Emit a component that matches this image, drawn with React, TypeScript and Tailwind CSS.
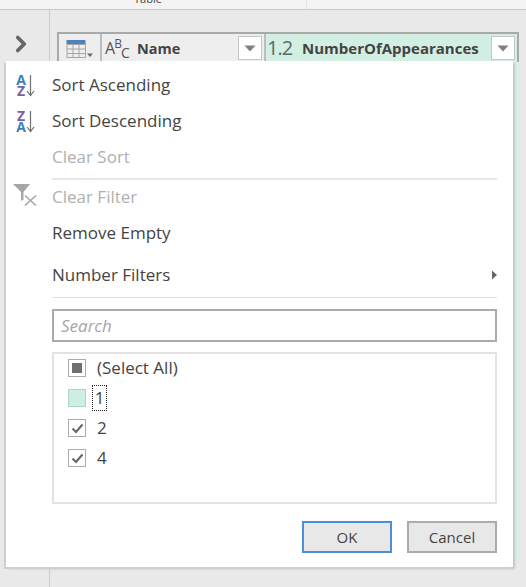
import { ChevronRight } from 'lucide-react';

const font = { fontFamily: '"Open Sans", "Noto Sans", sans-serif' };

function DropButton() {
  return (
    <div className="w-[24px] h-[24px] bg-white border border-[#c4c8c6] flex items-center justify-center shrink-0">
      <svg width="12" height="7" viewBox="0 0 12 7"><path d="M0.5 0.5H11.5L6 6.5Z" fill="#808080" /></svg>
    </div>
  );
}

function TableIcon() {
  return (
    <svg width="30" height="20" viewBox="0 0 30 20">
      <rect x="0.5" y="1" width="19" height="4" fill="#4f81bd" />
      <path d="M1 5.5H19M1 10H19M1 14.5H19M1 5V18.5H19.5V5M7 5V18.5M13 5V18.5" fill="none" stroke="#a6a6a6" strokeWidth="1" />
      <path d="M21 14.5H27L24 18Z" fill="#6a6a6a" />
    </svg>
  );
}

function SortIcon({ top, bottom }: { top: string; bottom: string }) {
  const color = (c: string) => (c === 'A' ? 'text-[#3f7fb8]' : 'text-[#7a5ea6]');
  return (
    <div className="w-[22px] h-[26px] flex items-center ml-[1px]">
      <div className="w-[10px] flex flex-col items-center font-bold text-[14px] leading-[11px]">
        <span className={color(top)}>{top}</span>
        <span className={color(bottom)}>{bottom}</span>
      </div>
      <svg width="9" height="24" viewBox="0 0 9 24">
        <path d="M4.5 2V22M1 18L4.5 22.5L8 18" fill="none" stroke="#6e6e6e" strokeWidth="1.2" />
      </svg>
    </div>
  );
}

function FilterIcon() {
  return (
    <svg width="26" height="26" viewBox="0 0 26 26" className="-ml-[3px]">
      <path d="M1 0H18L11.5 8V15.5L9 17V8Z" fill="#a6a6a6" />
      <path d="M13 11.5L24 21.5M24 11.5L13 21.5" stroke="#a6a6a6" strokeWidth="1.6" fill="none" />
    </svg>
  );
}

function MenuItem({ label, icon, disabled, h = 36, arrow }: { label: string; icon?: React.ReactNode; disabled?: boolean; h?: number; arrow?: boolean }) {
  return (
    <div className="flex items-center pl-[9px] pr-[15px]" style={{ height: h }}>
      <div className="w-[37px] flex items-center justify-start">{icon}</div>
      <span className={`flex-1 text-[17px] ${disabled ? 'text-[#b0b0b0]' : 'text-[#444444]'}`}>{label}</span>
      {arrow && (
        <svg width="7" height="10" viewBox="0 0 7 10"><path d="M1 0.5L6 5L1 9.5Z" fill="#666666" /></svg>
      )}
    </div>
  );
}

function CheckRow({ label, state }: { label: string; state: 'partial' | 'empty' | 'checked' }) {
  return (
    <div className="h-[30px] flex items-center pl-[14px]">
      <div className={`w-[18px] h-[18px] border flex items-center justify-center shrink-0 ${state === 'empty' ? 'bg-[#cdeee0] border-[#a9d9c5]' : 'bg-white border-[#ababab]'}`}>
        {state === 'partial' && <div className="w-[10px] h-[10px] bg-[#707070]" />}
        {state === 'checked' && (
          <svg width="13" height="11" viewBox="0 0 13 11"><path d="M1.5 5.5L5 9L11.5 1.5" fill="none" stroke="#6a6a6a" strokeWidth="2.2" /></svg>
        )}
      </div>
      {state === 'empty' ? (
        <span className="ml-[6px] w-[15px] h-[26px] border border-dotted border-[#222222] flex items-center justify-center text-[17px] text-[#444444]">{label}</span>
      ) : (
        <span className="ml-[11px] text-[17px] text-[#444444]">{label}</span>
      )}
    </div>
  );
}

export default function App() {
  return (
    <div className="relative w-[526px] h-[587px] overflow-hidden bg-[#e9e9e9] flex flex-col" style={font}>
      <div className="h-[10px] shrink-0 bg-[#f4f4f4] border-b border-[#c9c9c9] flex overflow-hidden">
        <div className="w-[307px] pr-[10px] border-r border-[#e6e6e6] flex justify-center">
          <span className="text-[11px] leading-[11px] text-[#444444] -mt-[7px]">Table</span>
        </div>
      </div>
      <div className="flex-1 flex">
        <div className="w-[50px] shrink-0 border-r border-[#cdcdcd] flex justify-center pt-[21px] pr-[7px]">
          <ChevronRight size={26} strokeWidth={3.5} className="text-[#666666]" />
        </div>
        <div className="flex-1 pl-[7px] pr-[8px] pt-[22px]">
          <div className="h-[30px] flex border-2 border-[#a9a9a9] border-b-0 bg-[#eeeeee]">
            <div className="w-[43px] border-r-2 border-[#bdbdbd] flex items-center pl-[7px] pt-[2px]"><TableIcon /></div>
            <div className="w-[164px] flex items-center pl-[3px] pr-[2px] border-r-2 border-[#bdbdbd]">
              <span className="w-[32px] text-[16px] text-[#555555] tracking-[-1px]">A<sup className="text-[12px]">B</sup><sub className="text-[14px]">C</sub></span>
              <span className="flex-1 pt-[1px] text-[14.5px] font-bold text-[#444444]">Name</span>
              <DropButton />
            </div>
            <div className="flex-1 flex items-center bg-[#d3efe3] pl-[1px] pr-[2px]">
              <span className="w-[35px] text-[20px] text-[#5a6b63] tracking-[-1px]">1.2</span>
              <span className="flex-1 text-[15px] font-bold text-[#444444]">NumberOfAppearances</span>
              <DropButton />
            </div>
          </div>
          <div className="h-[497px] ml-[457px] -mr-[1px] w-[6px] bg-[#dcefe7]" />
        </div>
      </div>

      <div className="absolute left-[6px] top-[61px] w-[507px] h-[506px] bg-white shadow-[-2px_2px_0_#cfcfcf,2px_2px_2px_#c4c4c4] flex flex-col">
        <div className="h-[6px]" />
        <MenuItem label="Sort Ascending" icon={<SortIcon top="A" bottom="Z" />} />
        <MenuItem label="Sort Descending" icon={<SortIcon top="Z" bottom="A" />} />
        <MenuItem label="Clear Sort" disabled />
        <div className="ml-[46px] mr-[16px] h-[2px] bg-[#e6e6e6] mt-[3px] mb-[0px]" />
        <div className="-mt-[1px]">
          <MenuItem label="Clear Filter" disabled h={36} icon={<FilterIcon />} />
        </div>
        <MenuItem label="Remove Empty" />
        <MenuItem label="Number Filters" h={48} arrow />
        <div className="ml-[46px] mr-[16px] h-[1px] bg-[#e0e0e0] mt-[-2px]" />
        <div className="mx-[46px] mr-[16px] mt-[11px] h-[33px] border-2 border-[#ababab] flex items-center px-[7px]">
          <span className="text-[17px] italic text-[#a6a6a6]">Search</span>
        </div>
        <div className="ml-[46px] mr-[16px] mt-[10px] h-[152px] border-2 border-[#e3e3e3]">
          <div className="-mt-[1px]">
            <CheckRow label="(Select All)" state="partial" />
            <CheckRow label="1" state="empty" />
            <CheckRow label="2" state="checked" />
            <CheckRow label="4" state="checked" />
          </div>
        </div>
        <div className="ml-[296px] mr-[16px] mt-[17px] flex gap-[15px]">
          <button className="w-[90px] h-[32px] bg-[#e8e8e8] border-2 border-[#4a90d9] text-[15px] text-[#444444]">OK</button>
          <button className="w-[90px] h-[32px] bg-[#e8e8e8] border-2 border-[#ababab] text-[15px] text-[#444444]">Cancel</button>
        </div>
      </div>
    </div>
  );
}
